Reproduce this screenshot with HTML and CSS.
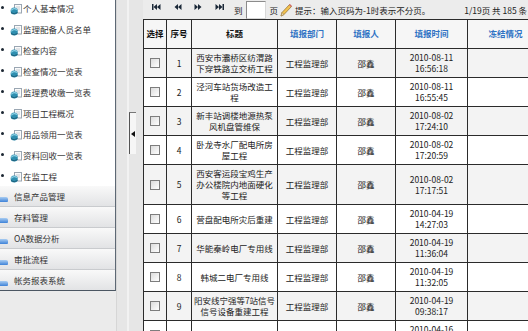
FILE: index.html
```html
<!DOCTYPE html>
<html lang="zh-CN">
<head>
    <meta charset="UTF-8">
    <meta name="viewport" content="width=device-width, initial-scale=1.0">
    <title>监理信息列表</title>
    <link rel="stylesheet" href="styles.css">
</head>
<body>
    <svg class="defs" width="0" height="0">
        <symbol id="doc" viewBox="0 0 12 11">
            <rect x="4.5" y="0.5" width="7" height="8.5" fill="#fbfbfb" stroke="#9aa6b2"/>
            <line x1="6" y1="3" x2="10" y2="3" stroke="#c5ccd3"/>
            <line x1="6" y1="5" x2="10" y2="5" stroke="#c5ccd3"/>
            <circle cx="4.2" cy="7" r="3.6" fill="#2f8fb0"/>
            <path d="M1.2 6.2 Q4 3.6 7 5.6" stroke="#8fd2e6" stroke-width="1.2" fill="none"/>
            <path d="M1 8.6 Q4 11 7.6 8.4" stroke="#1d5f7a" stroke-width="1" fill="none"/>
        </symbol>
    </svg>

    <div class="frame">
        <aside class="side">
            <div class="side-panel">
                <ul class="tree">
                    <li><span class="dot"></span><svg class="doc"><use href="#doc"/></svg>个人基本情况</li>
                    <li><span class="dot"></span><svg class="doc"><use href="#doc"/></svg>监理配备人员名单</li>
                    <li><span class="dot"></span><svg class="doc"><use href="#doc"/></svg>检查内容</li>
                    <li><span class="dot"></span><svg class="doc"><use href="#doc"/></svg>检查情况一览表</li>
                    <li><span class="dot"></span><svg class="doc"><use href="#doc"/></svg>监理费收缴一览表</li>
                    <li><span class="dot"></span><svg class="doc"><use href="#doc"/></svg>项目工程概况</li>
                    <li><span class="dot"></span><svg class="doc"><use href="#doc"/></svg>用品领用一览表</li>
                    <li><span class="dot"></span><svg class="doc"><use href="#doc"/></svg>资料回收一览表</li>
                    <li><span class="dot"></span><svg class="doc"><use href="#doc"/></svg>在监工程</li>
                </ul>
                <div class="acc">
                    <div class="acc-item"><span class="acc-icon"></span>信息产品管理</div>
                    <div class="acc-item"><span class="acc-icon"></span>存料管理</div>
                    <div class="acc-item"><span class="acc-icon"></span>OA数据分析</div>
                    <div class="acc-item"><span class="acc-icon"></span>审批流程</div>
                    <div class="acc-item"><span class="acc-icon"></span>帐务报表系统</div>
                </div>
            </div>
        </aside>

        <div class="splitter">
            <div class="handle"><span class="arrow"></span></div>
        </div>

        <main class="main">
            <div class="toolbar">
                <svg class="nav" viewBox="0 0 9 6"><rect x="0" y="0" width="1.5" height="6"/><path d="M5 0 L1.5 3 L5 6Z M8.5 0 L5 3 L8.5 6Z"/></svg>
                <svg class="nav" viewBox="0 0 9 6"><path d="M5 0 L1.5 3 L5 6Z M8.5 0 L5 3 L8.5 6Z"/></svg>
                <svg class="nav" viewBox="0 0 9 6"><path d="M0.5 0 L4 3 L0.5 6Z M4 0 L7.5 3 L4 6Z"/></svg>
                <svg class="nav" viewBox="0 0 9 6"><path d="M0.5 0 L4 3 L0.5 6Z M4 0 L7.5 3 L4 6Z"/><rect x="7.5" y="0" width="1.5" height="6"/></svg>
                <span class="goto">到</span>
                <input class="page-input" type="text">
                <span class="page-unit">页</span>
                <svg class="pencil" viewBox="0 0 12 14">
                    <path d="M1 13 L2 9.5 L9.5 1.5 L11.5 3.5 L4 11.5 Z" fill="#f2c14e" stroke="#9a7a3a" stroke-width="0.8"/>
                    <path d="M1 13 L2 9.5 L4 11.5 Z" fill="#f4e2c0" stroke="#9a7a3a" stroke-width="0.6"/>
                    <path d="M9.5 1.5 L11.5 3.5" stroke="#d06a6a" stroke-width="1.4"/>
                </svg>
                <span class="tip">提示：输入页码为-1时表示不分页。</span>
                <span class="count">1/19页 共 185 条</span>
            </div>

            <table class="grid">
                <colgroup>
                    <col class="c-sel">
                    <col class="c-no">
                    <col class="c-title">
                    <col class="c-dept">
                    <col class="c-user">
                    <col class="c-time">
                    <col class="c-frz">
                </colgroup>
                <thead>
                    <tr>
                        <th>选择</th>
                        <th>序号</th>
                        <th>标题</th>
                        <th class="blue">填报部门</th>
                        <th class="blue">填报人</th>
                        <th class="blue">填报时间</th>
                        <th class="blue">冻结情况</th>
                    </tr>
                </thead>
                <tbody>
                    <tr>
                        <td><input class="chk" type="checkbox"></td>
                        <td>1</td>
                        <td>西安市灞桥区纺渭路下穿铁路立交桥工程</td>
                        <td>工程监理部</td>
                        <td>邵鑫</td>
                        <td>2010-08-11<br>16:56:18</td>
                        <td></td>
                    </tr>
                    <tr>
                        <td><input class="chk" type="checkbox"></td>
                        <td>2</td>
                        <td>泾河车站货场改造工程</td>
                        <td>工程监理部</td>
                        <td>邵鑫</td>
                        <td>2010-08-11<br>16:55:45</td>
                        <td></td>
                    </tr>
                    <tr>
                        <td><input class="chk" type="checkbox"></td>
                        <td>3</td>
                        <td>新丰站调楼地源热泵风机盘管维保</td>
                        <td>工程监理部</td>
                        <td>邵鑫</td>
                        <td>2010-08-02<br>17:24:10</td>
                        <td></td>
                    </tr>
                    <tr>
                        <td><input class="chk" type="checkbox"></td>
                        <td>4</td>
                        <td>卧龙寺水厂配电所房屋工程</td>
                        <td>工程监理部</td>
                        <td>邵鑫</td>
                        <td>2010-08-02<br>17:20:59</td>
                        <td></td>
                    </tr>
                    <tr>
                        <td><input class="chk" type="checkbox"></td>
                        <td>5</td>
                        <td>西安客运段宝鸡生产办公楼院内地面硬化等工程</td>
                        <td>工程监理部</td>
                        <td>邵鑫</td>
                        <td>2010-08-02<br>17:17:51</td>
                        <td></td>
                    </tr>
                    <tr>
                        <td><input class="chk" type="checkbox"></td>
                        <td>6</td>
                        <td>营盘配电所灾后重建</td>
                        <td>工程监理部</td>
                        <td>邵鑫</td>
                        <td>2010-04-19<br>14:27:03</td>
                        <td></td>
                    </tr>
                    <tr>
                        <td><input class="chk" type="checkbox"></td>
                        <td>7</td>
                        <td>华能秦岭电厂专用线</td>
                        <td>工程监理部</td>
                        <td>邵鑫</td>
                        <td>2010-04-19<br>11:36:04</td>
                        <td></td>
                    </tr>
                    <tr>
                        <td><input class="chk" type="checkbox"></td>
                        <td>8</td>
                        <td>韩城二电厂专用线</td>
                        <td>工程监理部</td>
                        <td>邵鑫</td>
                        <td>2010-04-19<br>11:32:05</td>
                        <td></td>
                    </tr>
                    <tr>
                        <td><input class="chk" type="checkbox"></td>
                        <td>9</td>
                        <td>阳安线宁强等7站信号信号设备重建工程</td>
                        <td>工程监理部</td>
                        <td>邵鑫</td>
                        <td>2010-04-19<br>09:38:17</td>
                        <td></td>
                    </tr>
                    <tr>
                        <td><input class="chk" type="checkbox"></td>
                        <td>10</td>
                        <td>西安站站台雨棚改造</td>
                        <td>工程监理部</td>
                        <td>邵鑫</td>
                        <td>2010-04-16<br>15:12:40</td>
                        <td></td>
                    </tr>
                </tbody>
            </table>
        </main>
    </div>
</body>
</html>
```

FILE: styles.css
```css
/* page frame */
html,
body {
    margin: 0;
    height: 100%;
    overflow: hidden;
    background-color: #ebebeb;
    font-family: "Noto Sans CJK SC", "Liberation Sans", sans-serif;
    font-size: 8.5px;
    color: #222;
}

.defs {
    position: absolute;
    width: 0;
    height: 0;
}

.frame {
    display: flex;
    height: 100%;
}

/* left menu */
.side {
    width: 116px;
    flex: none;
}

.side-panel {
    height: 290px;
    background-color: #fff;
    border-right: 1px solid #5d6874;
    border-bottom: 1px solid #4b5662;
    overflow: hidden;
}

.tree {
    list-style: none;
    margin: -3px 0 0;
    padding: 0;
    height: 189px;
}

.tree li {
    display: flex;
    align-items: center;
    height: 21px;
    padding-left: 1px;
    color: #333;
}

.dot {
    width: 3px;
    height: 3px;
    border-radius: 50%;
    background-color: #1c2733;
    margin-right: 6px;
}

.doc {
    width: 12px;
    height: 11px;
    margin-right: 1px;
    margin-top: 3px;
}

.acc-item {
    display: flex;
    align-items: center;
    height: 20px;
    border-bottom: 1px solid #c9cbce;
    background: linear-gradient(#f9f9f9, #e2e3e5);
    color: #333;
}

.acc-icon {
    width: 8px;
    height: 5px;
    margin: 6px 6px 0 0;
    border-radius: 0 2px 1px 0;
    background: linear-gradient(#a9cdf2, #3e82d8);
}

/* splitter */
.splitter {
    width: 27px;
    flex: none;
    background-color: #e6e6e6;
    border-left: 1px solid #d6d6d6;
    box-sizing: border-box;
    padding: 112px 0 0 12px;
    background-image: linear-gradient(90deg, transparent 10px, #f2f2f2 10px, #f2f2f2 12px, transparent 12px);
}

.handle {
    display: flex;
    align-items: center;
    width: 6px;
    height: 41px;
    border-left: 1px solid #555;
    border-top: 1px solid #777;
    background-color: #f6f6f6;
}

.arrow {
    width: 0;
    height: 0;
    margin-left: 1px;
    border-top: 3px solid transparent;
    border-bottom: 3px solid transparent;
    border-right: 4px solid #111;
}

/* right content */
.main {
    flex: 1;
    min-width: 0;
    overflow: hidden;
    background-color: #ececec;
}

.toolbar {
    display: flex;
    align-items: center;
    height: 19px;
    padding-left: 9px;
    white-space: nowrap;
}

.nav {
    width: 9px;
    height: 6px;
    margin: -6px 12px 0 0;
    fill: #1b2838;
}

.goto {
    margin-left: -2px;
}

.page-input {
    width: 20px;
    height: 18px;
    margin: 0 0 0 3px;
    padding: 0;
    box-sizing: border-box;
    border: 1px solid #d8d8d8;
    border-top-color: #8c8c8c;
    border-left-color: #8c8c8c;
    background-color: #fff;
}

.page-unit {
    margin-left: 4px;
}

.pencil {
    width: 12px;
    height: 14px;
    margin-left: 2px;
}

.tip {
    margin-left: 3px;
}

.count {
    margin-left: 34px;
}

/* data grid */
.grid {
    border-collapse: collapse;
    table-layout: fixed;
    width: 400px;
    background-color: #fff;
}

.c-sel { width: 23px; }
.c-no { width: 25px; }
.c-title { width: 86px; }
.c-dept { width: 59px; }
.c-user { width: 59px; }
.c-time { width: 72px; }
.c-frz { width: 76px; }

.grid th,
.grid td {
    border: 1px solid #2b2b2b;
    text-align: center;
    vertical-align: middle;
    line-height: 11px;
}

.grid th {
    padding: 8px 0 9px;
    background-color: #f6f6f6;
    font-weight: bold;
    color: #111;
}

.grid th.blue {
    color: #2f73c4;
}

.grid td {
    padding: 3px 1px;
}

.grid tbody tr:nth-child(odd) td {
    background-color: #f3f3f3;
}

.chk {
    appearance: none;
    display: block;
    width: 10px;
    height: 10px;
    margin: 0 auto;
    border: 1px solid #7d7d7d;
    background: linear-gradient(135deg, #dcdcdc, #fff);
}
```
